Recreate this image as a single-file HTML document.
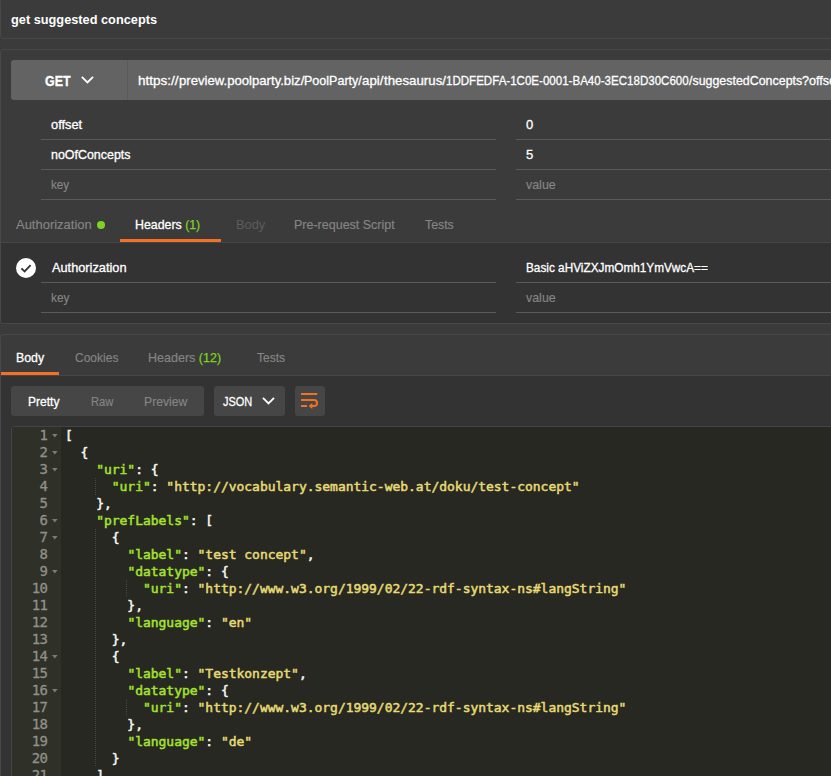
<!DOCTYPE html>
<html lang="en">
<head>
<meta charset="utf-8">
<title>get suggested concepts</title>
<style>
html,body{margin:0;padding:0;}
body{width:831px;height:776px;overflow:hidden;background:#3b3b3b;position:relative;
  font-family:"Liberation Sans","DejaVu Sans",sans-serif;font-size:13px;color:#fff;
  -webkit-font-smoothing:antialiased;}
.abs{position:absolute;}
.panel{position:absolute;left:0;width:900px;border:1px solid #484848;border-radius:3px;box-sizing:border-box;}
.dark{position:absolute;background:#333;}
.t{position:absolute;white-space:nowrap;line-height:20px;height:20px;transform-origin:0 50%;}
.w{color:#fff;-webkit-text-stroke-width:0.3px;}
.g{color:#858585;-webkit-text-stroke-width:0.15px;}
.ph{color:#868686;-webkit-text-stroke-width:0.15px;}
.grn{color:#7ed321;-webkit-text-stroke-width:0.25px;}
.ln{position:absolute;height:1px;background:#5a5a5a;}
.btn{position:absolute;background:#464646;border-radius:3px;height:30px;top:386px;}
/*FIT*/
#title{left:10.88px !important;transform:scaleX(0.9813);}
#get{left:45.36px !important;transform:scaleX(0.8314);}
#p1k{left:51.36px !important;transform:scaleX(0.9880);}
#p2k{left:51.36px !important;transform:scaleX(0.9567);}
#p3k{left:51.20px !important;transform:scaleX(0.9000);}
#p3v{left:525.64px !important;transform:scaleX(0.9555);}
#t1{left:16.36px !important;transform:scaleX(0.9976);}
#t2{left:135.36px !important;transform:scaleX(0.9503);}
#t3{left:235.64px !important;transform:scaleX(0.9877);}
#t4{left:293.52px !important;transform:scaleX(0.9615);}
#t5{left:425.00px !important;transform:scaleX(0.9473);}
#h1k{left:51.60px !important;transform:scaleX(0.9818);}
#h1v{left:526.00px !important;transform:scaleX(0.9430);}
#h2k{left:51.20px !important;transform:scaleX(0.9100);}
#h2v{left:525.64px !important;transform:scaleX(0.9555);}
#r1{left:16.20px !important;transform:scaleX(0.9500);}
#r2{left:75.20px !important;transform:scaleX(0.9250);}
#r3{left:148.36px !important;transform:scaleX(0.9629);}
#r4{left:256.84px !important;transform:scaleX(0.9275);}
#b1{left:27.72px !important;transform:scaleX(0.9262);}
#b2{left:91.30px !important;transform:scaleX(0.8650);}
#b3{left:143.88px !important;transform:scaleX(0.9396);}
#b4{left:223.30px !important;transform:scaleX(0.8450);}
/*ENDFIT*/
/* code */
#ed{position:absolute;left:11px;top:426px;width:900px;height:400px;background:#272822;border:1px solid #444;border-radius:3px;box-sizing:border-box;overflow:hidden;}
#gut{position:absolute;left:0;top:0;width:49px;height:400px;background:#2f3129;}
.code,.num{font-family:"DejaVu Sans Mono","Liberation Mono",monospace;font-size:13px;line-height:17px;white-space:pre;margin:0;}
.num{position:absolute;left:0;top:0;width:35.4px;text-align:right;color:#8f908a;-webkit-text-stroke-width:0.3px;font-size:14px;letter-spacing:-0.63px;}
.code{position:absolute;left:53px;top:0;color:#f8f8f2;letter-spacing:-0.03px;-webkit-text-stroke-width:0.5px;}
.k{color:#a6e22e;}
.s{color:#e6db74;}
.fold{position:absolute;left:40px;width:5.6px;height:3.6px;background:#7a7b74;clip-path:polygon(0 0,100% 0,50% 100%);}
.guide{position:absolute;width:1px;background-image:linear-gradient(to bottom,#464740 50%,transparent 50%);background-size:1px 2px;}
</style>
</head>
<body>

<!-- panel 1: title -->
<div class="panel" style="top:-1px;height:40px;"></div>
<div class="t w" id="title" style="left:11px;top:10px;font-weight:bold;font-size:13px;-webkit-text-stroke-width:0;">get suggested concepts</div>

<!-- panel 2: request -->
<div class="panel" style="top:49px;height:275px;"></div>
<div class="dark" style="left:1px;top:243px;width:900px;height:80px;border-radius:0 0 0 3px;"></div>

<!-- url bar -->
<div class="abs" style="left:11px;top:60px;width:900px;height:40px;background:#636363;border-radius:3px;"></div>
<div class="abs" style="left:127px;top:60px;width:1px;height:40px;background:#5a5a5a;"></div>
<div class="t w" id="get" style="left:45px;top:70.5px;font-weight:bold;font-size:15px;-webkit-text-stroke-width:0.3px;">GET</div>
<svg class="abs" style="left:80px;top:74px;" width="16" height="12" viewBox="0 0 16 12"><path d="M1.85 2.85 L7.45 8.45 L13.05 2.85" fill="none" stroke="#fff" stroke-width="1.8"/></svg>
<div id="url"><span class="t w" id="u0" style="left:137.9px;top:71px;transform:scaleX(1.04);">https://</span><span class="t w" id="u0b" style="left:178.6px;top:71px;transform:scaleX(1.0101);">preview.poolparty.biz/</span><span class="t w" id="u1" style="left:303.7px;top:71px;transform:scaleX(0.9636);">PoolParty/</span><span class="t w" id="u2" style="left:362.0px;top:71px;transform:scaleX(1.025);">api/</span><span class="t w" id="u3" style="left:383.8px;top:71px;transform:scaleX(1.0214);">thesaurus/</span><span class="t w" id="u4" style="left:445.6px;top:71px;transform:scaleX(0.8885);">1DDFEDFA-1C0E-0001-BA40-3EC18D30C600</span><span class="t w" id="u5" style="left:688.7px;top:71px;transform:scaleX(0.955);">/suggestedConcepts</span><span class="t w" id="u6" style="left:801.5px;top:71px;transform:scaleX(0.97);">?offset=0&amp;noOfConcepts=5</span></div>

<!-- params -->
<div class="t w" id="p1k" style="left:51px;top:115px;">offset</div>
<div class="t w" id="p1v" style="left:526px;top:115px;">0</div>
<div class="t w" id="p2k" style="left:51px;top:145px;">noOfConcepts</div>
<div class="t w" id="p2v" style="left:526px;top:145px;">5</div>
<div class="t ph" id="p3k" style="left:51px;top:175px;">key</div>
<div class="t ph" id="p3v" style="left:526px;top:175px;">value</div>
<div class="ln" style="left:41px;width:455px;top:139px;"></div>
<div class="ln" style="left:516px;width:400px;top:139px;"></div>
<div class="ln" style="left:41px;width:455px;top:169px;"></div>
<div class="ln" style="left:516px;width:400px;top:169px;"></div>
<div class="ln" style="left:41px;width:455px;top:199px;"></div>
<div class="ln" style="left:516px;width:400px;top:199px;"></div>

<!-- request tabs -->
<div class="abs" style="left:1px;top:242px;width:900px;height:1px;background:#464646;"></div>
<div class="t g" id="t1" style="left:16px;top:215px;">Authorization</div>
<div class="abs" style="left:97px;top:221px;width:8px;height:8px;border-radius:50%;background:#7ed321;"></div>
<div class="t w" id="t2" style="left:135px;top:215px;">Headers <span class="grn" id="t2n">(1)</span></div>
<div class="abs" style="left:120px;top:239px;width:101px;height:3px;background:#f47023;"></div>
<div class="t" id="t3" style="left:236px;top:215px;color:#5c5c5c;">Body</div>
<div class="t g" id="t4" style="left:294px;top:215px;">Pre-request Script</div>
<div class="t g" id="t5" style="left:425px;top:215px;">Tests</div>

<!-- header rows -->
<div class="abs" style="left:16px;top:258px;width:20px;height:20px;border-radius:50%;background:#fff;"></div>
<svg class="abs" style="left:16px;top:258px;" width="20" height="20" viewBox="0 0 20 20"><path d="M5.4 10.4 L8.6 13.4 L14.6 7.2" fill="none" stroke="#333" stroke-width="1.8"/></svg>
<div class="t w" id="h1k" style="left:51px;top:258px;">Authorization</div>
<div class="t w" id="h1v" style="left:526px;top:258px;font-size:12.5px;">Basic aHViZXJmOmh1YmVwcA==</div>
<div class="t ph" id="h2k" style="left:51px;top:288px;">key</div>
<div class="t ph" id="h2v" style="left:526px;top:288px;">value</div>
<div class="ln" style="left:41px;width:455px;top:282px;"></div>
<div class="ln" style="left:516px;width:400px;top:282px;"></div>
<div class="ln" style="left:41px;width:455px;top:312px;"></div>
<div class="ln" style="left:516px;width:400px;top:312px;"></div>

<!-- panel 3: response -->
<div class="panel" style="top:334px;height:500px;"></div>
<div class="dark" style="left:1px;top:376px;width:900px;height:420px;"></div>
<div class="abs" style="left:1px;top:375px;width:900px;height:1px;background:#464646;"></div>
<div class="abs" style="left:1px;top:372px;width:58px;height:3px;background:#f47023;"></div>
<div class="t w" id="r1" style="left:16px;top:348px;">Body</div>
<div class="t g" id="r2" style="left:74px;top:348px;">Cookies</div>
<div class="t g" id="r3" style="left:148px;top:348px;">Headers <span class="grn" id="r3n">(12)</span></div>
<div class="t g" id="r4" style="left:256px;top:348px;">Tests</div>

<!-- buttons -->
<div class="btn" style="left:11px;width:193px;"></div>
<div class="t w" id="b1" style="left:27px;top:392px;">Pretty</div>
<div class="t g" id="b2" style="left:90px;top:392px;">Raw</div>
<div class="t g" id="b3" style="left:144px;top:392px;">Preview</div>
<div class="btn" style="left:214px;width:71px;"></div>
<div class="t w" id="b4" style="left:223px;top:392px;">JSON</div>
<svg class="abs" style="left:261px;top:395px;" width="16" height="12" viewBox="0 0 16 12"><path d="M1.95 2.85 L7.5 8.4 L13.05 2.85" fill="none" stroke="#fff" stroke-width="1.8"/></svg>
<div class="btn" style="left:295px;width:30px;"></div>
<svg class="abs" style="left:295px;top:386px;" width="30" height="30" viewBox="0 0 30 30"><g fill="none" stroke="#f47023" stroke-width="2"><path d="M6 8 H22.2"/><path d="M6 14 H19 a3 3 0 0 1 0 6 H16.5"/><path d="M6 20 H12"/></g><path d="M17.3 16.9 L13.6 20 L17.3 23.1 Z" fill="#f47023"/></svg>

<!-- editor -->
<div id="ed">
<div id="gut"></div>
<div class="fold" style="top:7px"></div><div class="fold" style="top:24px"></div><div class="fold" style="top:41px"></div><div class="fold" style="top:92px"></div><div class="fold" style="top:109px"></div><div class="fold" style="top:143px"></div><div class="fold" style="top:228px"></div><div class="fold" style="top:262px"></div>
<div class="guide" style="left:83px;top:51px;height:17px"></div><div class="guide" style="left:83px;top:102px;height:238px"></div><div class="guide" style="left:114px;top:153px;height:17px"></div><div class="guide" style="left:114px;top:272px;height:17px"></div>
<pre class="num" id="nums">1
2
3
4
5
6
7
8
9
10
11
12
13
14
15
16
17
18
19
20
21</pre>
<pre class="code" id="code">[
  {
    <span class="k">"uri"</span>: {
      <span class="k">"uri"</span>: <span class="s">"http://vocabulary.semantic-web.at/doku/test-concept"</span>
    },
    <span class="k">"prefLabels"</span>: [
      {
        <span class="k">"label"</span>: <span class="s">"test concept"</span>,
        <span class="k">"datatype"</span>: {
          <span class="k">"uri"</span>: <span class="s">"http://www.w3.org/1999/02/22-rdf-syntax-ns#langString"</span>
        },
        <span class="k">"language"</span>: <span class="s">"en"</span>
      },
      {
        <span class="k">"label"</span>: <span class="s">"Testkonzept"</span>,
        <span class="k">"datatype"</span>: {
          <span class="k">"uri"</span>: <span class="s">"http://www.w3.org/1999/02/22-rdf-syntax-ns#langString"</span>
        },
        <span class="k">"language"</span>: <span class="s">"de"</span>
      }
    ]</pre>
</div>

</body>
</html>
